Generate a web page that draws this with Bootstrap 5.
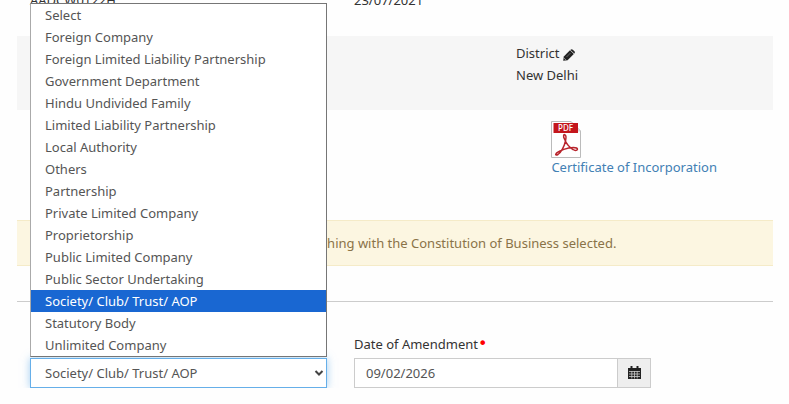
<!DOCTYPE html>
<html lang="en">
<head>
<meta charset="utf-8">
<meta name="viewport" content="width=device-width, initial-scale=1">
<title>Amendment of Registration</title>
<link href="https://cdn.jsdelivr.net/npm/bootstrap@5.3.0/dist/css/bootstrap.min.css" rel="stylesheet">
<style>
body{font-family:"Noto Sans",Verdana,sans-serif;font-size:13px;line-height:22px;color:#333;background:#fefefe;overflow:hidden}
.page-main{padding:0 16px 0 17px}
.cell{padding:0 14px 0 13px;min-width:0}
.grid-fields{display:grid;grid-template-columns:3fr 3fr 1fr}
.grid-address{display:grid;grid-template-columns:9fr 5fr}
.grid-docs{display:grid;grid-template-columns:20fr 9fr}
.summary-row{margin-top:-11px;height:47px}
.address-row{background:#f6f6f6;padding:6px 0 24px}
.docs-row{padding:11px 0 42px}
.doc-link{color:#4280b4;text-decoration:none}
.doc-link svg{display:block;margin-bottom:-2px}
.notice{background:#fcf6e1;border:1px solid #f5ebc8;border-width:1px 0;border-radius:0;color:#8a7348;padding:11px 15px 11px 37%;margin:0}
.rule{margin:35px 0 31px;border-top:1px solid #ccc;opacity:1}
.field-label{margin:0 0 3px;display:block;min-height:22px}
.req{color:#f00;font-family:"DejaVu Sans",sans-serif;font-size:16px;line-height:16px}
.field-select,.field-text{height:30px;font-size:13px;line-height:22px;color:#555;border-radius:0;padding:3px 11px}
.field-text{border:1px solid #ccc}
.field-select,.field-select:focus{border:1px solid #66afe9;padding:3px 24px 3px 14px;box-shadow:0 0 8px rgba(102,175,233,.6);background-image:url("data:image/svg+xml,%3Csvg xmlns='http://www.w3.org/2000/svg' viewBox='0 0 10 10'%3E%3Cpath d='M1.5 3 5 6.5 8.5 3' fill='none' stroke='%23444' stroke-width='2'/%3E%3C/svg%3E");background-size:10px;background-position:right 2px center}
.date-btn{width:34px;height:30px;padding:0;border:1px solid #ccc;border-radius:0;background:#eee;color:#222}
.option-list{position:absolute;left:0;right:0;bottom:100%;margin-bottom:1px;z-index:5;border:1px solid #767676;border-left-color:#aaa;border-radius:0;background:#fff}
.option-list .list-group-item{border:0;padding:0 14px;color:#555;line-height:22px;background:#fff;text-align:left}
.option-list .list-group-item.active{background:#1967d2;color:#fff;margin:0}
</style>
<script src="https://cdn.jsdelivr.net/npm/bootstrap@5.3.0/dist/js/bootstrap.bundle.min.js"></script>
</head>
<body>
<main class="page-main">
  <section class="summary-row grid-fields">
    <div class="cell">AADCW0122H</div>
    <div class="cell">23/07/2021</div>
  </section>
  <section class="address-row grid-address">
    <div class="cell"></div>
    <div class="cell">
      <div>District <svg width="12" height="12" viewBox="0 0 12 12" aria-hidden="true"><path d="M.8 7.500 7 1.300 10.800 5 4.600 11.200 .2 11.800z" fill="#222"/><path d="M7.600.700Q8.700-.300 9.800.700L11.400 2.300Q12.400 3.300 11.400 4.400L11.200 4.600 7.400 .9z" fill="#222"/><path d="M3.500 8 7.500 4" stroke="#999" stroke-width=".6"/><path d="M1.300 9.400 2.600 10.700" stroke="#f6f6f6" stroke-width=".8"/></svg></div>
      <div>New Delhi</div>
    </div>
  </section>
  <section class="docs-row grid-docs">
    <div class="cell"></div>
    <div class="cell">
      <a class="doc-link" href="#">
        <svg width="32" height="37" viewBox="0 0 32 37" aria-hidden="true"><path d="M.5.5H20L29.500 10V36.500H.5z" fill="#fff" stroke="#bbb"/><path d="M20 .5V10H29.500z" fill="#e8e8e8" stroke="#ccc" stroke-width=".7"/><path d="M2.500 2H27V12H2.500z" fill="#c4161c"/><text x="14.500" y="10" text-anchor="middle" font-size="8" font-weight="500" fill="#fff">PDF</text><path d="M14 14C12.500 12.500 12 15.500 13.500 18C15 22 18 26 22 28.500C25 30.500 28 28.500 25.500 27C22 25.500 14 27.500 8 30.500C3.500 32.500 4 35 7 33.500C10 31.500 13.500 25 14.500 20C15.200 17 15.200 14.500 14 14z" fill="none" stroke="#b8242c" stroke-width="1.500"/></svg>
        Certificate of Incorporation
      </a>
    </div>
  </section>
  <div class="notice alert" role="alert">matching with the Constitution of Business selected.</div>
  <hr class="rule">
  <form class="grid-fields">
    <div class="cell">
      <label class="field-label" for="constitution"></label>
      <div class="position-relative">
        <select id="constitution" class="form-select field-select" aria-label="Constitution of Business"><option>Society/ Club/ Trust/ AOP</option></select>
        <div class="option-list list-group">
          <button type="button" class="list-group-item">Select</button>
          <button type="button" class="list-group-item">Foreign Company</button>
          <button type="button" class="list-group-item">Foreign Limited Liability Partnership</button>
          <button type="button" class="list-group-item">Government Department</button>
          <button type="button" class="list-group-item">Hindu Undivided Family</button>
          <button type="button" class="list-group-item">Limited Liability Partnership</button>
          <button type="button" class="list-group-item">Local Authority</button>
          <button type="button" class="list-group-item">Others</button>
          <button type="button" class="list-group-item">Partnership</button>
          <button type="button" class="list-group-item">Private Limited Company</button>
          <button type="button" class="list-group-item">Proprietorship</button>
          <button type="button" class="list-group-item">Public Limited Company</button>
          <button type="button" class="list-group-item">Public Sector Undertaking</button>
          <button type="button" class="list-group-item active">Society/ Club/ Trust/ AOP</button>
          <button type="button" class="list-group-item">Statutory Body</button>
          <button type="button" class="list-group-item">Unlimited Company</button>
        </div>
      </div>
    </div>
    <div class="cell">
      <label class="field-label" for="amendDate">Date of Amendment<span class="req">•</span></label>
      <div class="input-group flex-nowrap">
        <input id="amendDate" class="form-control field-text" type="text" value="09/02/2026">
        <button type="button" class="btn date-btn d-flex align-items-center justify-content-center" aria-label="Choose date">
          <svg width="13" height="14" viewBox="0 0 13 14" aria-hidden="true"><path d="M0 2H13V13H0z" fill="#222"/><path d="M3.500 0V3.500M9.500 0V3.500" stroke="#222" stroke-width="2"/><path d="M1 5.500H12M1 8H12M1 10.500H12M3.800 5V12.500M6.500 5V12.500M9.200 5V12.500" stroke="#ccc" stroke-width=".8"/></svg>
        </button>
      </div>
    </div>
  </form>
</main>
</body>
</html>
